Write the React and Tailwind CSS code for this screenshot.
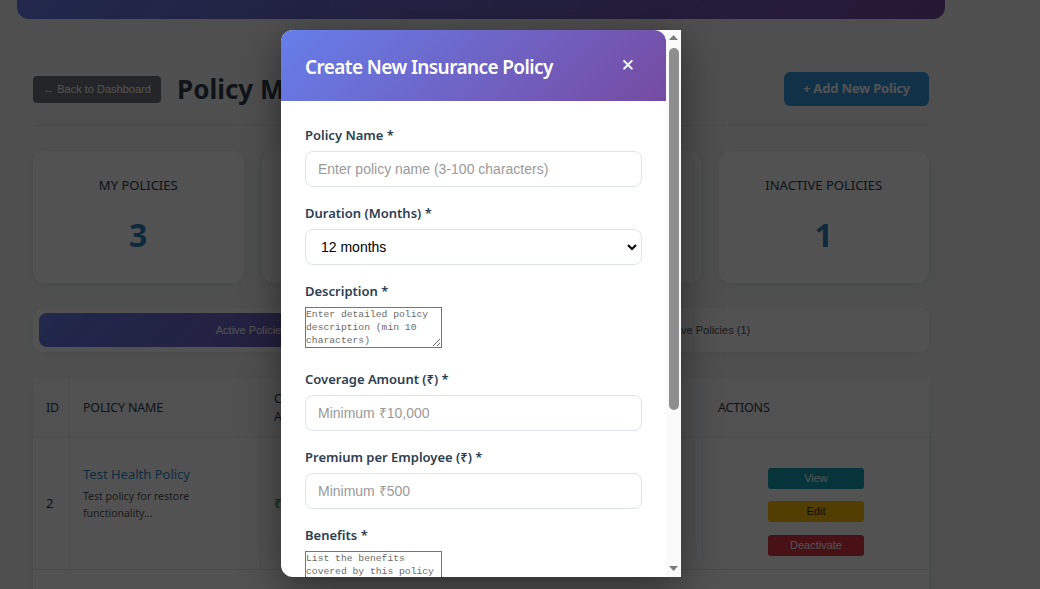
import React from "react";

const GRAD = "bg-[linear-gradient(135deg,#667eea_0%,#764ba2_100%)]";

export default function App() {
  const stats = [
    { label: "MY POLICIES", value: 3 },
    { label: "ACTIVE POLICIES", value: 2 },
    { label: "TOTAL EMPLOYEES", value: 5 },
    { label: "INACTIVE POLICIES", value: 1 },
  ];

  const cols = [
    { name: "ID", w: "w-[37px]" },
    { name: "POLICY NAME", w: "w-[191px]" },
    { name: "COVERAGE AMOUNT", w: "w-[110px]" },
    { name: "PREMIUM", w: "w-[110px]" },
    { name: "DURATION", w: "w-[111px]" },
    { name: "STATUS", w: "w-[111px]" },
    { name: "ACTIONS", w: "flex-1 pl-[15px]" },
  ];

  return (
    <div className="relative h-[589px] w-[1040px] overflow-hidden bg-[#f4f5f7] font-['Segoe_UI','Noto_Sans',sans-serif]">
      {/* page behind the modal */}
      <div className={`ml-[17px] h-[19px] w-[928px] rounded-b-[12px] ${GRAD}`} />

      <div className="ml-[33px] w-[896px]">
        <div className="mt-[53px] flex h-[34px] items-center justify-between border-b border-[#dfe3e8] pb-[19px] box-content">
          <div className="flex items-center gap-[16px]">
            <button className="h-[27px] w-[128px] rounded-[4px] bg-[#6c757d] font-['Liberation_Sans',Arial,sans-serif] text-[11px] text-white">
              ← Back to Dashboard
            </button>
            <h1 className="text-[26px] font-bold leading-[34px] text-[#2c3e50]">Policy Management</h1>
          </div>
          <button className="h-[34px] w-[145px] rounded-[6px] bg-[#3498db] text-[13px] font-bold tracking-[-0.2px] text-white">
            + Add New Policy
          </button>
        </div>

        <div className="mt-[25px] grid grid-cols-4 gap-[18px]">
          {stats.map((s) => (
            <div key={s.label} className="flex h-[132px] flex-col items-center rounded-[12px] bg-white pt-[26px] shadow-[0_2px_10px_rgba(0,0,0,0.08)]">
              <div className="text-[13px] leading-[16px] text-[#2c3e50]">{s.label}</div>
              <div className="mt-[23px] text-[32px] font-bold leading-[38px] text-[#2e86c1]">{s.value}</div>
            </div>
          ))}
        </div>

        <div className="mt-[25px] flex h-[44px] gap-[2px] rounded-[10px] bg-white px-[6px] py-[5px] shadow-[0_2px_10px_rgba(0,0,0,0.06)] font-['Liberation_Sans',Arial,sans-serif] text-[11px]">
          <div className={`flex flex-1 items-center justify-center rounded-[8px] text-white ${GRAD}`}>Active Policies (2)</div>
          <div className="flex flex-1 items-center justify-center text-[#495057]">Inactive Policies (1)</div>
        </div>

        <div className="mt-[26px] rounded-[12px] bg-white shadow-[0_2px_10px_rgba(0,0,0,0.08)]">
          <div className="flex h-[60px] border-b border-[#e5e7eb] bg-[#fafbfc] text-[12.5px] tracking-[-0.2px] text-[#2c3e50]">
            {cols.map((c) => (
              <div key={c.name} className={`${c.w} flex items-center border-r border-[#eceef1] px-[13px] leading-[18px] last:border-r-0`}>
                {c.name}
              </div>
            ))}
          </div>
          <div className="flex h-[132px] border-b border-[#e5e7eb] text-[13px] text-[#333]">
            <div className="flex w-[37px] items-center border-r border-[#eceef1] px-[13px]">2</div>
            <div className="flex w-[191px] flex-col justify-center border-r border-[#eceef1] px-[13px] pb-[20px]">
              <div className="text-[13px] leading-[18px] text-[#2e86c1]">Test Health Policy</div>
              <div className="mt-[5px] text-[10.5px] leading-[17px] text-[#555]">Test policy for restore<br />functionality...</div>
            </div>
            <div className="flex w-[110px] items-center border-r border-[#eceef1] px-[13px] font-bold text-[#27ae60]">₹50,000</div>
            <div className="flex w-[110px] items-center border-r border-[#eceef1] px-[13px]">₹1,000</div>
            <div className="flex w-[111px] items-center border-r border-[#eceef1] px-[13px]">12 months</div>
            <div className="flex w-[111px] items-center border-r border-[#eceef1] px-[13px]">Active</div>
            <div className="flex flex-1 flex-col items-center justify-center gap-[12.5px] pt-[16px] font-['Liberation_Sans',Arial,sans-serif] text-[11px]">
              <button className="h-[21px] w-[96px] rounded-[3px] bg-[#17a2b8] text-white">View</button>
              <button className="h-[21px] w-[96px] rounded-[3px] bg-[#ffc107] text-[#212529]">Edit</button>
              <button className="h-[21px] w-[96px] rounded-[3px] bg-[#dc3545] text-white">Deactivate</button>
            </div>
          </div>
          <div className="h-[60px]" />
        </div>
      </div>

      {/* overlay */}
      <div className="absolute inset-0 bg-black/[0.68]" />

      {/* modal */}
      <div className="absolute left-[281px] top-[30px] flex h-[547px] w-[400px] overflow-hidden rounded-l-[12px] bg-white shadow-[0_10px_40px_rgba(0,0,0,0.45)]">
        <div className="w-[385px] overflow-hidden">
          <div className={`flex h-[71px] items-center justify-between rounded-tr-[12px] pl-[24px] pr-[31px] ${GRAD}`}>
            <h2 className="pt-[3px] text-[19px] font-semibold tracking-[-0.6px] text-white">Create New Insurance Policy</h2>
            <span className="font-['DejaVu_Sans',sans-serif] text-[17px] font-bold text-white">✕</span>
          </div>

          <div className="px-[24px] pt-[26px] text-[13px] text-[#2c3e50]">
            <label className="mb-[8px] block font-semibold leading-[16px]">Policy Name *</label>
            <input className="mb-[18px] block h-[36px] w-[337px] rounded-[8px] border border-[#dde3ea] px-[12px] font-['Liberation_Sans',Arial,sans-serif] text-[14px] placeholder:text-[#9a9a9a]" placeholder="Enter policy name (3-100 characters)" />

            <label className="mb-[8px] block font-semibold leading-[16px]">Duration (Months) *</label>
            <div className="mb-[18px] flex h-[36px] w-[337px] items-center justify-between rounded-[8px] border border-[#dde3ea] pl-[15px] pr-[4px] font-['Liberation_Sans',Arial,sans-serif] text-[14px] text-black">
              <span>12 months</span>
              <svg width="10" height="7" viewBox="0 0 10 7"><polyline points="1,1 5,5 9,1" fill="none" stroke="#000" strokeWidth="2" /></svg>
            </div>

            <label className="mb-[8px] block font-semibold leading-[16px]">Description *</label>
            <textarea className="mb-[23px] block h-[41px] w-[137px] resize border border-[#767676] p-0 font-['Liberation_Mono',monospace] text-[9.7px] leading-[13px] text-black placeholder:text-[#6b6b6b]" placeholder="Enter detailed policy description (min 10 characters)" />

            <label className="mb-[8px] block font-semibold leading-[16px]">Coverage Amount (₹) *</label>
            <input className="mb-[18px] block h-[36px] w-[337px] rounded-[8px] border border-[#dde3ea] px-[12px] font-['Liberation_Sans',Arial,sans-serif] text-[14px] placeholder:text-[#9a9a9a]" placeholder="Minimum ₹10,000" />

            <label className="mb-[8px] block font-semibold leading-[16px]">Premium per Employee (₹) *</label>
            <input className="mb-[18px] block h-[36px] w-[337px] rounded-[8px] border border-[#dde3ea] px-[12px] font-['Liberation_Sans',Arial,sans-serif] text-[14px] placeholder:text-[#9a9a9a]" placeholder="Minimum ₹500" />

            <label className="mb-[8px] block font-semibold leading-[16px]">Benefits *</label>
            <textarea className="block h-[41px] w-[137px] resize border border-[#767676] p-0 font-['Liberation_Mono',monospace] text-[9.7px] leading-[13px] text-black placeholder:text-[#6b6b6b]" placeholder="List the benefits covered by this policy" />
          </div>
        </div>

        {/* scrollbar */}
        <div className="flex w-[15px] flex-col items-center bg-[#fafafa]">
          <svg className="mt-[5px]" width="9" height="5" viewBox="0 0 9 5"><polygon points="0,5 4.5,0 9,5" fill="#7a7a7a" /></svg>
          <div className="mt-[8px] h-[362px] w-[10px] rounded-[5px] bg-[#8e8e8e]" />
          <div className="flex-1" />
          <svg className="mb-[6px]" width="9" height="5" viewBox="0 0 9 5"><polygon points="0,0 9,0 4.5,5" fill="#7a7a7a" /></svg>
        </div>
      </div>
    </div>
  );
}
